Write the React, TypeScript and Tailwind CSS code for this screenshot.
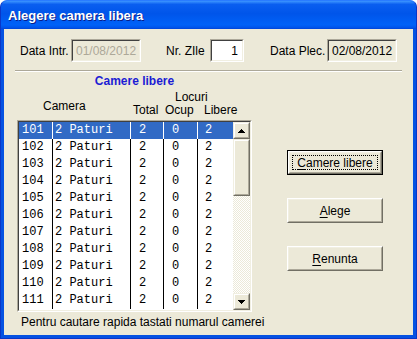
import React from "react";

const rooms = Array.from({ length: 11 }, (_, i) => ({
  nr: String(101 + i),
  tip: "2 Paturi",
  total: 2,
  ocup: 0,
  libere: 2,
}));

const Arrow = ({ up }: { up?: boolean }) => (
  <svg width="7" height="4" viewBox="0 0 7 4" shapeRendering="crispEdges">
    <polygon points={up ? "3.5,0 7,4 0,4" : "0,0 7,0 3.5,4"} fill="#000" />
  </svg>
);

// raised 3d box, classic look
const Raised = ({ className, children }: { className?: string; children?: React.ReactNode }) => (
  <div className={"border border-t-[#f1efe2] border-l-[#f1efe2] border-r-[#716f64] border-b-[#716f64] " + (className ?? "")}>
    <div className="h-full w-full border border-t-white border-l-white border-r-[#aca899] border-b-[#aca899] bg-[#ece9d8] flex items-center justify-center">
      {children}
    </div>
  </div>
);

const Sunken = ({ className, inner, children }: { className?: string; inner?: string; children?: React.ReactNode }) => (
  <div className={"border border-t-[#aca899] border-l-[#aca899] border-r-white border-b-white " + (className ?? "")}>
    <div className={"h-full w-full border border-t-[#404040] border-l-[#404040] border-r-[#f1efe2] border-b-[#f1efe2] flex items-center " + (inner ?? "")}>
      {children}
    </div>
  </div>
);

const Button = ({ label, rest, isDefault }: { label: string; rest: string; isDefault?: boolean }) => (
  <div className={"w-[96px] h-[25px] " + (isDefault ? "border border-black" : "")}>
    <div className="h-full w-full border border-t-white border-l-white border-r-[#716f64] border-b-[#716f64]">
      <div className="h-full w-full border border-t-[#f1efe2] border-l-[#f1efe2] border-r-[#aca899] border-b-[#aca899] bg-[#ece9d8] flex items-center justify-center p-[2px]">
        <div className={"h-full w-full flex items-center justify-center " + (isDefault ? "border border-dotted border-black" : "")}>
          <span>
            <span className="underline underline-offset-2">{label}</span>
            {rest}
          </span>
        </div>
      </div>
    </div>
  </div>
);

export default function App() {
  return (
    <div className="w-[417px] h-[339px] bg-white font-['Liberation_Sans',Arial,sans-serif] text-[12px] text-black">
      <div className="h-full flex flex-col rounded-t-[7px] overflow-hidden bg-[#0350e0] border border-[#0a36c8] border-t-[#2a7cff]">
        <div className="h-[28px] flex items-center pl-[7px] pt-[2px] bg-[linear-gradient(180deg,#3d95ff_0%,#0a5ef0_12%,#0055ea_45%,#0062f8_85%,#0056ec_94%,#0044d8_100%)]">
          <span className="text-white font-bold text-[13px] [text-shadow:1px_1px_#0a1e8a]">Alegere camera libera</span>
        </div>
        <div className="flex-1 px-[3px] pb-[3px] bg-[#0552e2]">
          <div className="h-full bg-[#ece9d8] flex flex-col">
            {/* dates row */}
            <div className="flex items-center mt-[10px] pl-[16px] h-[23px]">
              <span className="w-[51px] whitespace-nowrap">Data Intr.</span>
              <Sunken className="w-[70px] h-full" inner="bg-[#ece9d8] text-[#aca899] pl-[3px]">01/08/2012</Sunken>
              <span className="ml-[25px] w-[44px] whitespace-nowrap">Nr. ZIle</span>
              <Sunken className="w-[34px] h-full" inner="bg-white justify-end pr-[4px]">1</Sunken>
              <span className="ml-[26px] w-[57px] whitespace-nowrap">Data Plec.</span>
              <Sunken className="w-[70px] h-full" inner="bg-[#ece9d8] pl-[3px]">02/08/2012</Sunken>
            </div>

            <div className="mt-[8px] mx-[11px] h-[2px] border-t border-t-[#aca899] border-b border-b-white" />

            <div className="flex">
              <div className="ml-[13px] w-[235px] flex flex-col">
                <div className="mt-[2px] h-[14px] leading-[14px] text-center font-bold text-[#1c1cd4]">Camere libere</div>

                <div className="h-[32px] flex">
                  <div className="w-[114px] pl-[26px] pt-[11px] leading-[14px]">Camera</div>
                  <div className="flex-1 flex flex-col">
                    <div className="h-[16px] pl-[44px] pt-[2px] leading-[14px]">Locuri</div>
                    <div className="flex leading-[14px] mt-[-1px]">
                      <span className="w-[33px] pl-[2px]">Total</span>
                      <span className="w-[34px] pl-[1px]">Ocup</span>
                      <span className="pl-[6px]">Libere</span>
                    </div>
                  </div>
                </div>

                <div className="h-[192px] border border-t-[#aca899] border-l-[#aca899] border-r-white border-b-white">
                  <div className="h-full border border-t-[#404040] border-l-[#404040] border-r-[#f1efe2] border-b-[#f1efe2] bg-white flex">
                    <div className="w-[214px] font-['Liberation_Mono','Courier_New',monospace] text-[12px]">
                      {rooms.map((r, i) => {
                        const sel = i === 0;
                        const sep = sel ? "border-r border-r-white" : "border-r border-r-black";
                        return (
                          <div
                            key={r.nr}
                            className={"flex h-[17px] leading-[17px] " + (sel ? "bg-[#316ac5] text-white" : "")}
                          >
                            <div className={"w-[34px] pl-[3px] " + sep}>{r.nr}</div>
                            <div className={"w-[78px] pl-[2px] whitespace-pre " + sep}>{r.tip}</div>
                            <div className={"w-[33px] pl-[8px] " + sep}>{r.total}</div>
                            <div className={"w-[34px] pl-[8px] " + sep}>{r.ocup}</div>
                            <div className="w-[35px] pl-[7px]">{r.libere}</div>
                          </div>
                        );
                      })}
                    </div>
                    <div className="w-[17px] flex flex-col">
                      <Raised className="h-[17px]">
                        <Arrow up />
                      </Raised>
                      <Raised className="h-[57px]" />
                      <div className="flex-1 bg-[image:repeating-conic-gradient(#ece9d8_0_25%,#ffffff_0_50%)] bg-[length:2px_2px]" />
                      <Raised className="h-[17px]">
                        <Arrow />
                      </Raised>
                    </div>
                  </div>
                </div>
              </div>

              <div className="ml-[35px] mt-[78px] flex flex-col gap-[23px]">
                <Button label="C" rest="amere libere" isDefault />
                <Button label="A" rest="lege" />
                <Button label="R" rest="enunta" />
              </div>
            </div>

            <div className="mt-[3px] pl-[17px] leading-[14px]">Pentru cautare rapida tastati numarul camerei</div>
          </div>
        </div>
      </div>
    </div>
  );
}
